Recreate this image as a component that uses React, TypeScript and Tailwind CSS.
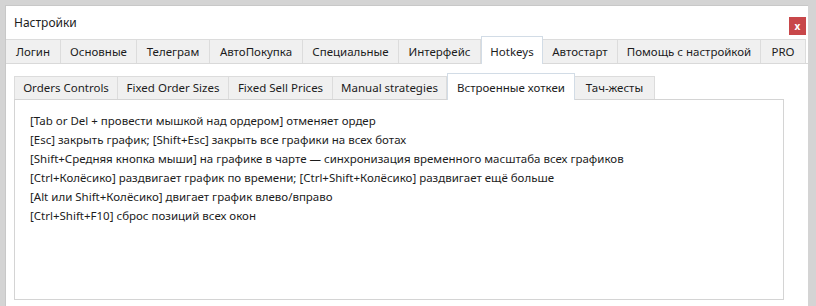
import React from "react";

const topTabs: { label: string; w: string; active?: boolean }[] = [
  { label: "Логин", w: "w-[55px]" },
  { label: "Основные", w: "w-[76px]" },
  { label: "Телеграм", w: "w-[73px]" },
  { label: "АвтоПокупка", w: "w-[93px]" },
  { label: "Специальные", w: "w-[96px]" },
  { label: "Интерфейс", w: "w-[82px]" },
  { label: "Hotkeys", w: "w-[62px]", active: true },
  { label: "Автостарт", w: "w-[75px]" },
  { label: "Помощь с настройкой", w: "w-[143px]" },
  { label: "PRO", w: "w-[45px]" },
];

const subTabs: { label: string; w: string; active?: boolean }[] = [
  { label: "Orders Controls", w: "w-[104px]" },
  { label: "Fixed Order Sizes", w: "w-[111px]" },
  { label: "Fixed Sell Prices", w: "w-[104px]" },
  { label: "Manual strategies", w: "w-[114px]" },
  { label: "Встроенные хоткеи", w: "w-[128px]", active: true },
  { label: "Тач-жесты", w: "w-[80px]" },
];

const lines = [
  "[Tab or Del + провести мышкой над ордером] отменяет ордер",
  "[Esc] закрыть график; [Shift+Esc] закрыть все графики на всех ботах",
  "[Shift+Средняя кнопка мыши] на графике в чарте — синхронизация временного масштаба всех графиков",
  "[Ctrl+Колёсико] раздвигает график по времени; [Ctrl+Shift+Колёсико] раздвигает ещё больше",
  "[Alt или Shift+Колёсико] двигает график влево/вправо",
  "[Ctrl+Shift+F10] сброс позиций всех окон",
];

export default function App() {
  return (
    <div
      className="w-[816px] h-[306px] overflow-hidden bg-[#d4d4d4] pt-[5px] pl-[5px] text-[#1c1c1c]"
      style={{ fontFamily: '"Noto Sans", "Open Sans", sans-serif' }}
    >
      <div className="w-[803px] h-[301px] bg-white border-l border-t border-[#c8c8c8] flex flex-col">
        <div className="h-[31px] flex items-center justify-between pl-[8px] pr-[2px]">
          <span className="text-[12px] leading-none mt-[2px]">Настройки</span>
          <div className="w-[17px] h-[18px] bg-[#c8474a] flex items-center justify-center text-white text-[10px] font-bold leading-none mt-[8px]">
            x
          </div>
        </div>
        <div className="flex items-end h-[27px] border-b border-[#d9d9d9]">
          {topTabs.map((t) =>
            t.active ? (
              <div
                key={t.label}
                className={`${t.w} h-[28px] -mb-px bg-white border border-b-0 border-[#d2dce6] flex items-center justify-center text-[11.5px] pt-[2px]`}
              >
                {t.label}
              </div>
            ) : (
              <div
                key={t.label}
                className={`${t.w} h-[24px] bg-[#f0f0f0] border-t border-r border-[#dcdcdc] flex items-center justify-center text-[11.5px] pt-[1px]`}
              >
                {t.label}
              </div>
            )
          )}
        </div>
        <div className="flex-1 pl-[8px] pt-[8px] pr-[24px]">
          <div className="flex items-end h-[27px]">
            {subTabs.map((t) =>
              t.active ? (
                <div
                  key={t.label}
                  className={`${t.w} h-[27px] -mb-px relative z-10 bg-white border border-b-0 border-[#d2dce6] flex items-center justify-center text-[11.5px] pt-[1px]`}
                >
                  {t.label}
                </div>
              ) : (
                <div
                  key={t.label}
                  className={`${t.w} h-[23px] bg-[#f0f0f0] border-t border-r border-[#dcdcdc] first:border-l flex items-center justify-center text-[11.5px]`}
                >
                  {t.label}
                </div>
              )
            )}
          </div>
          <div className="h-[201px] border border-[#d4d4d4] pl-[15px] pt-[11px]">
            {lines.map((l) => (
              <div key={l} className="text-[11.5px] leading-[19px] whitespace-nowrap">
                {l}
              </div>
            ))}
          </div>
        </div>
      </div>
    </div>
  );
}
